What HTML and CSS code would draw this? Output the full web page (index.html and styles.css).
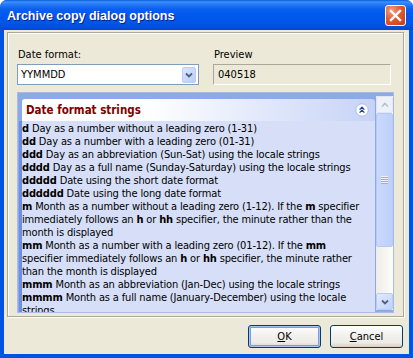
FILE: index.html
```html
<!DOCTYPE html>
<html lang="en">
<head>
    <meta charset="UTF-8">
    <title>Archive copy dialog options</title>
    <link rel="stylesheet" href="styles.css">
</head>
<body>

    <div class="window">

        <div class="titlebar">
            <span class="title">Archive copy dialog options</span>
            <button class="close">
                <svg width="13" height="13" viewBox="0 0 13 13"><path d="M2 2 L11 11 M11 2 L2 11" stroke="#fff" stroke-width="2.4" stroke-linecap="square"/></svg>
            </button>
        </div>

        <div class="client">

            <div class="frame">

                <div class="fields">
                    <div class="field">
                        <label>Date format:</label>
                        <div class="combo">
                            <span class="combo-value">YYMMDD</span>
                            <span class="drop">
                                <svg width="8" height="6" viewBox="0 0 8 6"><path d="M1 1.5 L4 4.5 L7 1.5" fill="none" stroke="#4D6185" stroke-width="1.8"/></svg>
                            </span>
                        </div>
                    </div>
                    <div class="field">
                        <label>Preview</label>
                        <div class="preview">040518</div>
                    </div>
                </div>

                <div class="strings">
                    <div class="viewport">
                        <div class="group-head">
                            <span>Date format strings</span>
                            <svg width="14" height="14" viewBox="0 0 14 14">
                                <circle cx="7" cy="7" r="6.2" fill="#fff" stroke="#A9BCE8" stroke-width="1"/>
                                <path d="M4.6 6.6 L7 4.2 L9.4 6.6 M4.6 9.6 L7 7.2 L9.4 9.6" fill="none" stroke="#21449C" stroke-width="1.3"/>
                            </svg>
                        </div>
                        <div class="group-body">
                            <b>d</b> Day as a number without a leading zero (1-31)<br>
                            <b>dd</b> Day as a number with a leading zero (01-31)<br>
                            <b>ddd</b> Day as an abbreviation (Sun-Sat) using the locale strings<br>
                            <b>dddd</b> Day as a full name (Sunday-Saturday) using the locale strings<br>
                            <b>ddddd</b> Date using the short date format<br>
                            <b>dddddd</b> Date using the long date format<br>
                            <b>m</b> Month as a number without a leading zero (1-12). If the <b>m</b> specifier<br>
                            immediately follows an <b>h</b> or <b>hh</b> specifier, the minute rather than the<br>
                            month is displayed<br>
                            <b>mm</b> Month as a number with a leading zero (01-12). If the <b>mm</b><br>
                            specifier immediately follows an <b>h</b> or <b>hh</b> specifier, the minute rather<br>
                            than the month is displayed<br>
                            <b>mmm</b> Month as an abbreviation (Jan-Dec) using the locale strings<br>
                            <b>mmmm</b> Month as a full name (January-December) using the locale<br>
                            strings
                        </div>
                    </div>
                    <div class="scrollbar">
                        <div class="sb-btn off">
                            <svg width="8" height="6" viewBox="0 0 8 6"><path d="M1 4.5 L4 1.5 L7 4.5" fill="none" stroke="#B4BFD6" stroke-width="1.6"/></svg>
                        </div>
                        <div class="thumb"><span class="grip"></span></div>
                        <div class="track"></div>
                        <div class="sb-btn">
                            <svg width="8" height="6" viewBox="0 0 8 6"><path d="M1 1.5 L4 4.5 L7 1.5" fill="none" stroke="#4D6185" stroke-width="1.8"/></svg>
                        </div>
                    </div>
                </div>

            </div>

            <div class="actions">
                <button class="btn default"><u>O</u>K</button>
                <button class="btn"><u>C</u>ancel</button>
            </div>

        </div>
    </div>

</body>
</html>
```

FILE: styles.css
```css
body{
    margin: 0;
    background: #fff;
    font-family: "DejaVu Sans Condensed", "DejaVu Sans", sans-serif;
    font-size: 11px;
    color: #000;
}

.window{
    width: 413px;
    height: 358px;
    display: flex;
    flex-direction: column;
    background: #0054E3;
    border-radius: 7px 7px 0 0;
    overflow: hidden;
}

/* title bar */

.titlebar{
    flex: none;
    height: 30px;
    display: flex;
    align-items: center;
    justify-content: space-between;
    padding: 0 7px;
    background: linear-gradient(to bottom, #0A5FDD 0, #3D91FF 2px, #2A7BF7 4px, #0A60EE 9px, #0058EE 15px, #0055E5 24px, #004DD8 28px, #0047CF 30px);
}

.title{
    font-family: "Liberation Sans", Arial, sans-serif;
    font-weight: bold;
    font-size: 12.5px;
    color: #fff;
    text-shadow: 1px 1px #0A1E8C;
    padding-top: 1px;
}

.close{
    width: 21px;
    height: 21px;
    padding: 0;
    border: 1px solid #fff;
    border-radius: 3px;
    background: radial-gradient(circle at 30% 25%, #F0A085, #E25A33 45%, #C63B16 100%);
    display: flex;
    align-items: center;
    justify-content: center;
}

/* client area */

.client{
    flex: 1;
    margin: 0 4px 4px;
    padding: 2px 5px 0 3px;
    background: #ECE9D8;
    display: flex;
    flex-direction: column;
}

.frame{
    border: 1px solid #ACA899;
    box-shadow: inset 1px 1px #fff, 1px 1px #fff;
    padding: 15px 9px 3px 9px;
}

.fields{
    display: grid;
    grid-template-columns: 182px 178px;
    column-gap: 14px;
}

.field label{
    display: block;
    line-height: 13px;
    margin: 0 0 3px 1px;
}

.combo{
    height: 21px;
    box-sizing: border-box;
    border: 1px solid #7F9DB9;
    background: #fff;
    display: flex;
    align-items: center;
    justify-content: space-between;
    padding: 0 2px;
}

.combo-value{
    padding-left: 1px;
}

.drop{
    width: 14px;
    height: 16px;
    box-sizing: border-box;
    border: 1px solid #BACDF8;
    border-radius: 2px;
    background: linear-gradient(135deg, #DCE6FD, #B9CCF9);
    display: flex;
    align-items: center;
    justify-content: center;
}

.preview{
    height: 21px;
    box-sizing: border-box;
    border: 1px solid;
    border-color: #ACA899 #fff #fff #ACA899;
    padding: 0 4px;
    line-height: 19px;
}

/* format strings panel */

.strings{
    margin-top: 7px;
    width: 377px;
    height: 221px;
    box-sizing: border-box;
    border: 1px solid #A8BCE6;
    background: #8DAAE8;
    display: flex;
}

.viewport{
    flex: 1;
    overflow: hidden;
    padding: 6px 1px 0 1px;
}

.group-head{
    margin-left: 3px;
    height: 22px;
    box-sizing: border-box;
    display: flex;
    align-items: center;
    justify-content: space-between;
    padding: 0 6px 0 4px;
    border-radius: 3px 3px 0 0;
    background: linear-gradient(to right, #fff 0, #fff 35%, #C6D3F7 100%);
    color: #800000;
    font-weight: bold;
    font-size: 11.5px;
}

.group-body{
    border-left: 3px solid #6C8FE2;
    background: #D6DFF7;
    padding-top: 1px;
    line-height: 13px;
    letter-spacing: -0.15px;
    white-space: nowrap;
    overflow: hidden;
    height: 200px;
}

.scrollbar{
    width: 17px;
    margin: 3px 0 2px;
    display: flex;
    flex-direction: column;
    background: linear-gradient(to right, #EEEDE5, #FDFDFA);
}

.sb-btn{
    height: 17px;
    box-sizing: border-box;
    border: 1px solid #B7CBF9;
    border-radius: 2px;
    background: linear-gradient(135deg, #E3EBFD, #BFD1FA);
    display: flex;
    align-items: center;
    justify-content: center;
}

.sb-btn.off{
    background: #EEF1F9;
    border-color: #E0E5F2;
}

.thumb{
    height: 134px;
    box-sizing: border-box;
    border: 1px solid #B5C8F6;
    border-radius: 2px;
    background: linear-gradient(to right, #CAD8FC, #BED0FA);
    display: flex;
    align-items: center;
    justify-content: center;
}

.grip{
    width: 7px;
    height: 8px;
    background: repeating-linear-gradient(to bottom, #EEF4FE 0 1px, #8CB0F8 1px 2px);
}

.track{
    flex: 1;
}

/* buttons */

.actions{
    display: flex;
    justify-content: flex-end;
    gap: 9px;
    padding: 8px 1px 0 0;
}

.btn{
    width: 73px;
    height: 23px;
    padding: 0;
    border: 1px solid #003C74;
    border-radius: 3px;
    background: linear-gradient(to bottom, #FFFFFF 0, #F3F2EE 40%, #ECEBE6 80%, #D6D0C5 100%);
    font-family: inherit;
    font-size: 11px;
    color: #000;
}

.btn.default{
    box-shadow: inset 0 0 0 1px #A8C4F2, inset 0 0 0 2px #7A9CE8;
}
```
